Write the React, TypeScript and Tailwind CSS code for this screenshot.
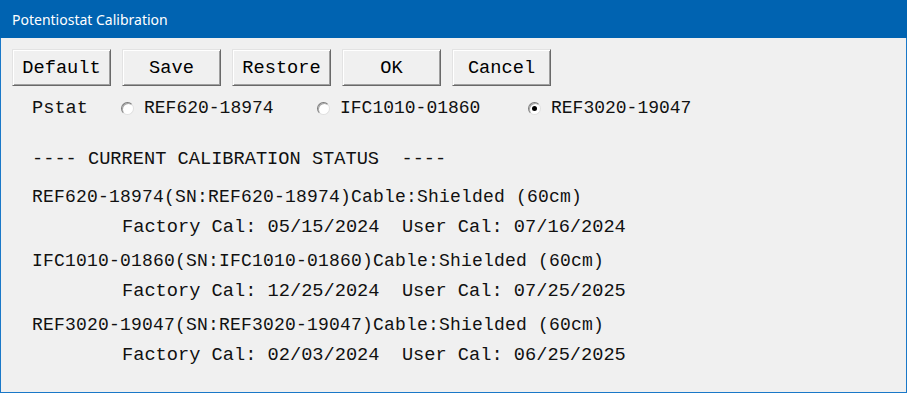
import React from "react";

const mono = { fontFamily: '"Liberation Mono", "Courier New", monospace' };

function Btn({ label }: { label: string }) {
  return (
    <div
      className="w-[99px] h-[37px] flex items-center justify-center bg-[#f0f0f0] border border-t-[#e3e3e3] border-l-[#e3e3e3] border-r-[#696969] border-b-[#696969] shadow-[inset_1px_1px_0_#ffffff,inset_-1px_-1px_0_#a0a0a0] text-[18.67px] text-black"
      style={mono}
    >
      <span className="whitespace-pre">{label}</span>
    </div>
  );
}

function Radio({ checked, label, width }: { checked?: boolean; label: string; width: string }) {
  return (
    <div className={`flex items-center ${width}`}>
      <div className="w-[13px] h-[13px] rounded-full bg-white border border-t-[#7a7a7a] border-l-[#7a7a7a] border-r-[#e0e0e0] border-b-[#e0e0e0] flex items-center justify-center shadow-[inset_1px_1px_0_#a8a8a8]">
        {checked && <div className="w-[5px] h-[5px] rounded-full bg-black" />}
      </div>
      <span className="ml-[10px] text-[18px] whitespace-pre">{label}</span>
    </div>
  );
}

function Group({ name, factory, user }: { name: string; factory: string; user: string }) {
  return (
    <div className="flex flex-col">
      <div className="h-[30px] flex items-center pt-[2px] text-[18px] tracking-[0.2px] whitespace-pre">
        {`${name}(SN:${name})Cable:Shielded (60cm)`}
      </div>
      <div className="h-[30px] flex items-center pt-[2px] pl-[90px] text-[18.67px] whitespace-pre">
        {`Factory Cal: ${factory}  User Cal: ${user}`}
      </div>
    </div>
  );
}

export default function App() {
  return (
    <div className="w-[907px] h-[393px] flex flex-col overflow-hidden">
      <div className="h-[38px] bg-[#0063b1] flex items-center pl-[12px] shrink-0">
        <span
          className="text-white text-[14px]"
          style={{ fontFamily: '"Noto Sans", "Open Sans", sans-serif' }}
        >
          Potentiostat Calibration
        </span>
      </div>
      <div
        className="flex-1 bg-[#f0f0f0] border-l border-r border-b border-[#1a78c8] flex flex-col text-[#111]"
        style={mono}
      >
        <div className="flex gap-[11px] pl-[11px] pt-[11px]">
          <Btn label="Default" />
          <Btn label="Save" />
          <Btn label="Restore" />
          <Btn label="OK" />
          <Btn label="Cancel" />
        </div>
        <div className="h-[30px] mt-[6px] flex items-center pl-[31px] pt-[2px]">
          <span className="w-[89px] text-[18.67px]">Pstat</span>
          <Radio label="REF620-18974" width="w-[196px]" />
          <Radio label="IFC1010-01860" width="w-[211px]" />
          <Radio label="REF3020-19047" checked width="w-[250px]" />
        </div>
        <div className="flex flex-col pl-[31px] mt-[21px]">
          <div className="h-[30px] flex items-center pt-[2px] text-[18.67px] whitespace-pre">
            {"---- CURRENT CALIBRATION STATUS  ----"}
          </div>
          <div className="flex flex-col gap-[4px] mt-[8px]">
            <Group name="REF620-18974" factory="05/15/2024" user="07/16/2024" />
            <Group name="IFC1010-01860" factory="12/25/2024" user="07/25/2025" />
            <Group name="REF3020-19047" factory="02/03/2024" user="06/25/2025" />
          </div>
        </div>
      </div>
    </div>
  );
}
